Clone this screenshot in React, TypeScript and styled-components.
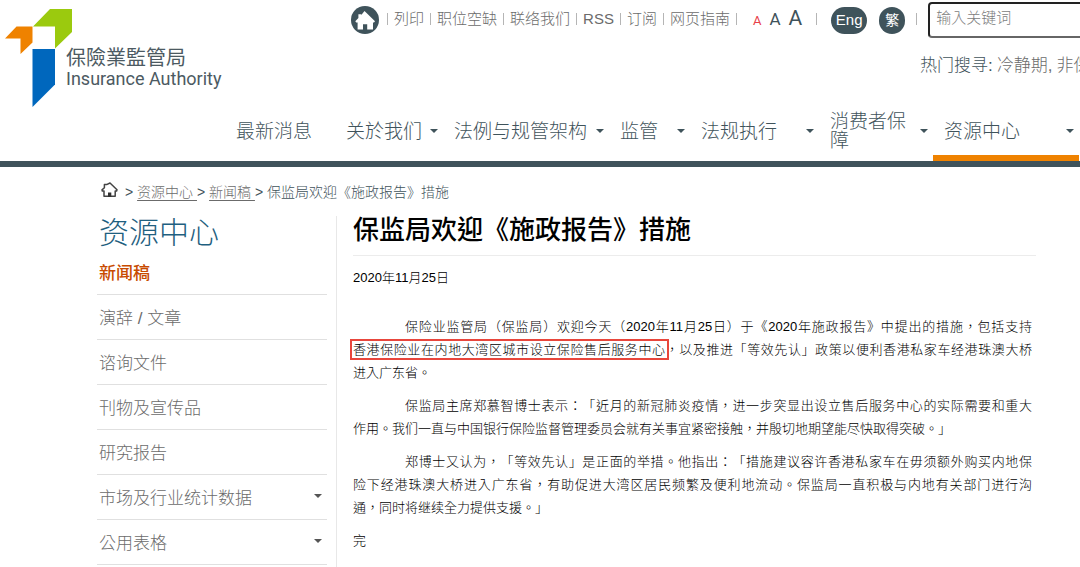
import React from 'react';
import styled, { createGlobalStyle } from 'styled-components';

const slate = '#3f535b';
const grey = '#6b6b6b';

const GlobalStyle = createGlobalStyle`
  *, *::before, *::after { box-sizing: border-box; }
  body {
    margin: 0;
    background: #fff;
    color: #000;
    font-family: 'Liberation Sans', 'Noto Sans CJK TC', sans-serif;
    font-weight: 300;
    text-spacing-trim: space-all;
    overflow-x: hidden;
  }
  a { color: inherit; text-decoration: none; }
  ul, h1, h2, p { margin: 0; padding: 0; list-style: none; }
`;

const Page = styled.div`
  min-height: 100vh;
  display: flex;
  flex-direction: column;
  overflow: hidden;
`;

const Header = styled.header`
  display: grid;
  grid-template-columns: 225px minmax(0, 1fr);
  height: 167px;
  border-bottom: 6px solid ${slate};
`;

const Logo = styled.a`
  display: flex;
  align-items: flex-start;
  padding: 8px 0 0 5px;
  color: #4c5a62;

  svg { flex: none; overflow: visible; }
`;

const LogoText = styled.span`
  display: flex;
  flex-direction: column;
  padding-top: 39px;
  white-space: nowrap;
`;

const LogoChinese = styled.span`
  font-size: 20px;
  line-height: 22px;
  font-weight: 400;
`;

const LogoEnglish = styled.span`
  font-family: Roboto, 'Liberation Sans', sans-serif;
  font-size: 18px;
  line-height: 20px;
  font-weight: 400;
`;

const HeaderMain = styled.div`
  display: flex;
  flex-direction: column;
  min-width: 0;
`;

const Utility = styled.div`
  display: flex;
  align-items: center;
  height: 38px;
  padding-left: 126px;
  white-space: nowrap;
  color: ${grey};
  font-size: 15px;
  line-height: 20px;
`;

const HomeLink = styled.a`
  display: flex;
  margin: 2px 8px 0 0;
`;

const UtilityLinks = styled.div`
  display: flex;
  align-items: center;
  gap: 6px;
`;

const Separator = styled.span`
  flex: none;
  width: 1px;
  height: 12px;
  background: #b5b5b5;
`;

const FontSizes = styled.div`
  display: flex;
  align-items: baseline;
  gap: 8px;
  padding: 0 14px 0 16px;
`;

const FontSizeButton = styled.button<{ $size: number; $active?: boolean }>`
  border: 0;
  padding: 0;
  background: none;
  font-family: Roboto, 'Liberation Sans', sans-serif;
  font-size: ${(p) => p.$size}px;
  line-height: 24px;
  color: ${(p) => (p.$active ? '#e8404a' : slate)};
`;

const Languages = styled.div`
  display: flex;
  gap: 12px;
  padding: 2px 11px 0 14px;
`;

const LanguageLink = styled.a<{ $wide?: boolean }>`
  display: flex;
  align-items: center;
  justify-content: center;
  width: ${(p) => (p.$wide ? 36 : 26)}px;
  height: 27px;
  border-radius: 14px;
  background: ${slate};
  color: #fff;
  font-weight: 400;
  font-size: ${(p) => (p.$wide ? 15 : 14)}px;
`;

const SearchInput = styled.input`
  flex: none;
  width: 240px;
  height: 36px;
  margin: 2px 0 0 11px;
  padding: 0 6px 5px;
  border: 2px solid #222;
  border-bottom-color: #666;
  border-radius: 4px;
  background: #fff;
  font: inherit;

  &::placeholder { color: #7d7d7d; opacity: 1; }
`;

const HotSearch = styled.div`
  display: flex;
  gap: 4px;
  padding: 16px 0 0 695px;
  white-space: nowrap;
  font-size: 17px;
  line-height: 24px;
  color: ${slate};
`;

const HotLink = styled.a`
  color: ${grey};
`;

const Nav = styled.nav`
  display: grid;
  grid-template-columns: 110fr 108fr 166fr 81fr 129fr 114fr 146fr 1px;
  height: 62px;
  margin-top: auto;
`;

const NavLink = styled.a<{ $active?: boolean }>`
  display: flex;
  align-items: center;
  justify-content: space-between;
  padding: 8px 5px 0 11px;
  border-bottom: 6px solid ${(p) => (p.$active ? '#ef8200' : 'transparent')};
  color: ${slate};
  font-size: 19px;
  line-height: 19px;
`;

const Caret = styled.span<{ $color?: string }>`
  flex: none;
  width: 0;
  height: 0;
  margin-left: 4px;
  border: 4px solid transparent;
  border-top-color: ${(p) => p.$color ?? slate};
  border-bottom: 0;
`;

const Breadcrumbs = styled.nav`
  display: flex;
  align-items: center;
  padding: 14px 44px 0 101px;
  font-size: 14px;
  line-height: 22px;
  color: ${slate};
`;

const CrumbHome = styled.a`
  display: flex;
  margin: -4px 7px 0 0;
`;

const CrumbTrail = styled.span`
  white-space: pre-wrap;
`;

const CrumbLink = styled.a`
  color: ${grey};
  text-decoration: underline;
  text-underline-offset: 3px;
`;

const Body = styled.main`
  flex: 1;
  display: grid;
  grid-template-columns: 240px minmax(0, 1fr);
  margin: 13px 44px 0 97px;
`;

const Sidebar = styled.aside`
  padding-right: 9px;
  border-right: 1px solid #e8e8e8;
`;

const SidebarTitle = styled.h2`
  padding-left: 2px;
  font-size: 30px;
  line-height: 34px;
  font-weight: 300;
  color: #1f6080;
`;

const SideLink = styled.a<{ $active?: boolean }>`
  display: flex;
  align-items: center;
  justify-content: space-between;
  height: 45px;
  padding: 0 5px 2px 2px;
  border-bottom: 1px solid #e0e0e0;
  font-size: 17px;
  font-weight: ${(p) => (p.$active ? 500 : 300)};
  color: ${(p) => (p.$active ? '#c84b00' : grey)};
`;

const Article = styled.article`
  padding-left: 16px;
`;

const ArticleTitle = styled.h1`
  height: 40px;
  border-bottom: 1px solid #ececec;
  font-size: 26px;
  line-height: 28px;
  font-weight: 500;
`;

const ArticleDate = styled.p`
  margin: 10px 0 26px;
  font-size: 13px;
  line-height: 23px;
`;

const Paragraph = styled.p`
  margin-bottom: 10px;
  padding-right: 4px;
  font-size: 13px;
  line-height: 23px;
`;

const Line = styled.span<{ $indent?: boolean; $full?: boolean }>`
  display: block;
  padding-left: ${(p) => (p.$indent ? 52 : 0)}px;
  text-align-last: ${(p) => (p.$full ? 'justify' : 'left')};
`;

const Highlight = styled.mark`
  background: none;
  color: inherit;
  outline: 2px solid #e8463c;
  outline-offset: 1px;
`;

const utilityLinks = ['列印', '职位空缺', '联络我们', 'RSS', '订阅', '网页指南'];
const navItems = ['最新消息', '关於我们', '法例与规管架构', '监管', '法规执行', '消费者保障', '资源中心'];
const sideItems = [
  { label: '新闻稿', active: true },
  { label: '演辞 / 文章' },
  { label: '谘询文件' },
  { label: '刊物及宣传品' },
  { label: '研究报告' },
  { label: '市场及行业统计数据', caret: true },
  { label: '公用表格', caret: true },
];

export default function App() {
  return (
    <Page>
      <GlobalStyle />
      <Header>
        <Logo href="#">
          <svg width="61" height="100" viewBox="5 8 61 100" aria-hidden="true">
            <path fill="#ef8200" d="M5 38.5 16.5 26.5H32.5V42.5L20.5 54V38.5Z" />
            <path fill="#9bca0e" d="M33 26.5 50 9H72V32L55 48.5V26.5Z" />
            <path fill="#0067bd" d="M32.5 49H55V84.5L32.5 107Z" />
          </svg>
          <LogoText>
            <LogoChinese>保險業監管局</LogoChinese>
            <LogoEnglish>Insurance Authority</LogoEnglish>
          </LogoText>
        </Logo>
        <HeaderMain>
          <Utility>
            <HomeLink href="#" aria-label="主页">
              <svg width="28" height="28" viewBox="0 0 28 28">
                <circle cx="14" cy="14" r="14" fill={slate} />
                <path fill="#fff" d="M13.5 5 24 15.2 23 16.6H22V23.4H16.2V18.2H12V23.4H6.6V16.6H5.2L4.3 15.2 7.4 12V8.2H10.3V8.9Z" />
              </svg>
            </HomeLink>
            <UtilityLinks>
              <Separator />
              {utilityLinks.map((label) => (
                <React.Fragment key={label}>
                  <a href="#">{label}</a>
                  <Separator />
                </React.Fragment>
              ))}
            </UtilityLinks>
            <FontSizes>
              <FontSizeButton $size={13} $active>A</FontSizeButton>
              <FontSizeButton $size={17}>A</FontSizeButton>
              <FontSizeButton $size={21}>A</FontSizeButton>
            </FontSizes>
            <Separator />
            <Languages>
              <LanguageLink href="#" $wide>Eng</LanguageLink>
              <LanguageLink href="#">繁</LanguageLink>
            </Languages>
            <Separator />
            <SearchInput type="text" placeholder="输入关键词" aria-label="输入关键词" />
          </Utility>
          <HotSearch>
            <span>热门搜寻:</span>
            <HotLink href="#">冷静期,</HotLink>
            <HotLink href="#">非保</HotLink>
          </HotSearch>
          <Nav>
            {navItems.map((label, i) => (
              <NavLink key={label} href="#" $active={i === navItems.length - 1}>
                <span>{label}</span>
                {i > 0 && <Caret />}
              </NavLink>
            ))}
          </Nav>
        </HeaderMain>
      </Header>

      <Breadcrumbs>
        <CrumbHome href="#" aria-label="主页">
          <svg width="17" height="16" viewBox="0 0 17 16" fill="none" stroke="#444" strokeWidth="1.5" strokeLinejoin="round">
            <path d="M3.4 5.8V2.6H5.6L9 1 16 7.8 15.6 9H14.2V14.2H3V9H1.3L1 7.9Z" />
            <path fill="#333" stroke="none" d="M7 10.5H10.3V15H7Z" />
          </svg>
        </CrumbHome>
        <CrumbTrail>
          {'> '}
          <CrumbLink href="#">{'资源中心 '}</CrumbLink>
          {'> '}
          <CrumbLink href="#">{'新闻稿 '}</CrumbLink>
          {'> 保监局欢迎《施政报告》措施'}
        </CrumbTrail>
      </Breadcrumbs>

      <Body>
        <Sidebar>
          <SidebarTitle>资源中心</SidebarTitle>
          <ul>
            {sideItems.map((item) => (
              <li key={item.label}>
                <SideLink href="#" $active={item.active}>
                  {item.label}
                  {item.caret && <Caret $color="#555" />}
                </SideLink>
              </li>
            ))}
          </ul>
        </Sidebar>
        <Article>
          <ArticleTitle>保监局欢迎《施政报告》措施</ArticleTitle>
          <ArticleDate>2020年11月25日</ArticleDate>
          <Paragraph>
            <Line $indent $full>保险业监管局（保监局）欢迎今天（2020年11月25日）于《2020年施政报告》中提出的措施，包括支持</Line>
            <Line $full>
              <Highlight>香港保险业在内地大湾区城市设立保险售后服务中心</Highlight>，以及推进「等效先认」政策以便利香港私家车经港珠澳大桥
            </Line>
            <Line>进入广东省。</Line>
          </Paragraph>
          <Paragraph>
            <Line $indent $full>保监局主席郑慕智博士表示：「近月的新冠肺炎疫情，进一步突显出设立售后服务中心的实际需要和重大</Line>
            <Line>作用。我们一直与中国银行保险监督管理委员会就有关事宜紧密接触，并殷切地期望能尽快取得突破。」</Line>
          </Paragraph>
          <Paragraph>
            <Line $indent $full>郑博士又认为，「等效先认」是正面的举措。他指出：「措施建议容许香港私家车在毋须额外购买内地保</Line>
            <Line $full>险下经港珠澳大桥进入广东省，有助促进大湾区居民频繁及便利地流动。保监局一直积极与内地有关部门进行沟</Line>
            <Line>通，同时将继续全力提供支援。」</Line>
          </Paragraph>
          <Paragraph>
            <Line>完</Line>
          </Paragraph>
        </Article>
      </Body>
    </Page>
  );
}
